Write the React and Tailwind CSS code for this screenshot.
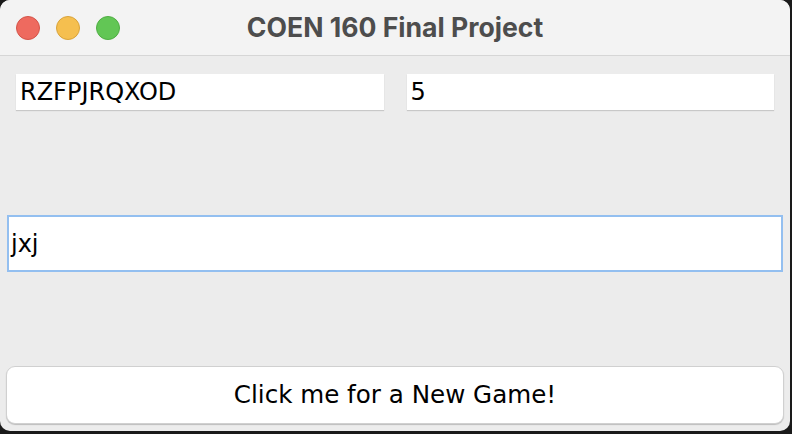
import React from 'react';

const TextRow = ({ value }) => (
  <div className="h-[36px] flex-1 bg-white shadow-[0_1px_1px_rgba(0,0,0,0.15)] flex items-center px-[4px]">
    <span className="text-[24px] text-black leading-none">{value}</span>
  </div>
);

const App = () => {
  return (
    <div className="w-[792px] h-[434px] bg-[#1a1a1a] overflow-hidden" style={{ fontFamily: '"DejaVu Sans", sans-serif' }}>
      <div className="w-[790px] h-[431px] rounded-[10px] overflow-hidden bg-[#ececec] flex flex-col">
        {/* Title bar */}
        <div className="h-[56px] shrink-0 bg-[#f3f3f3] border-b border-[#d6d6d6] flex items-center relative">
          <div className="flex items-center gap-[16px] pl-[16px]">
            <span className="w-[24px] h-[24px] rounded-full bg-[#ee6a5f] border border-[#d45449]" />
            <span className="w-[24px] h-[24px] rounded-full bg-[#f5bf4f] border border-[#d9a33a]" />
            <span className="w-[24px] h-[24px] rounded-full bg-[#62c655] border border-[#4fae43]" />
          </div>
          <div className="absolute inset-0 flex items-center justify-center pointer-events-none">
            <span className="text-[26.6px] font-bold text-[#4d4d4d] leading-none" style={{ fontFamily: 'Inter, sans-serif' }}>COEN 160 Final Project</span>
          </div>
        </div>

        {/* Content */}
        <div className="flex-1 flex flex-col">
          <div className="flex gap-[23px] px-[16px] pt-[18px]">
            <TextRow value="RZFPJRQXOD" />
            <TextRow value="5" />
          </div>

          <div className="mx-[7px] mt-[105px] h-[57px] bg-white border-2 border-[#93bff0] flex items-center px-[2px]">
            <span className="text-[24px] text-black leading-none">jxj</span>
          </div>

          <div className="mx-[6px] mt-[94px] h-[58px] bg-white rounded-[9px] border border-[#d0d0d0] shadow-[0_1px_1px_rgba(0,0,0,0.2)] flex items-center justify-center">
            <span className="text-[24.6px] text-black leading-none">Click me for a New Game!</span>
          </div>
        </div>
      </div>
    </div>
  );
};

export default App;
